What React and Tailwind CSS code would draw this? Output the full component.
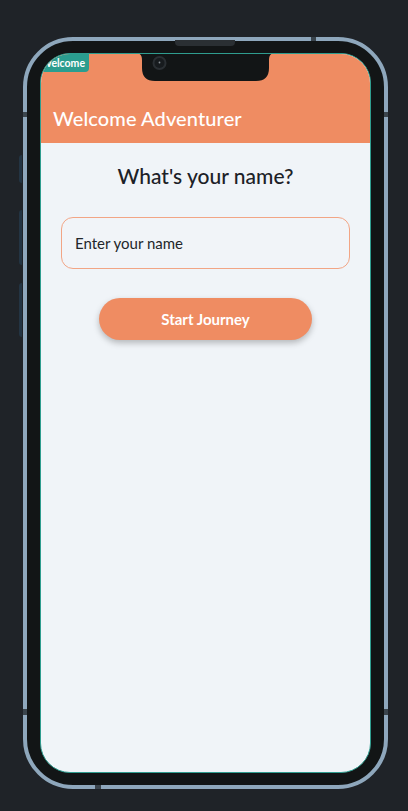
export default function App() {
  const font = { fontFamily: 'Lato, "Noto Sans", sans-serif' };
  return (
    <div className="w-[408px] h-[811px] bg-[#1f2328] relative overflow-hidden pl-[23px] pt-[37px]" style={font}>
      {/* faint side buttons behind frame */}
      <div className="absolute left-[19px] top-[155px] w-[3px] h-[28px] bg-[#233443] rounded-l-sm" />
      <div className="absolute left-[19px] top-[210px] w-[3px] h-[55px] bg-[#233443] rounded-l-sm" />
      <div className="absolute left-[19px] top-[283px] w-[3px] h-[54px] bg-[#233443] rounded-l-sm" />

      <div className="relative w-[365px] h-[752px] rounded-[50px] border-4 border-[#8ea7bc] bg-[#121516] pt-[12px] pb-[12px] px-[13px]">
        {/* speaker */}
        <div className="absolute left-[148px] top-[-1px] w-[60px] h-[6px] rounded-b-[4px] bg-[#2a2f33]" />
        {/* frame marks */}
        <div className="absolute left-[-4px] top-[71px] w-[4px] h-[5px] bg-[#3a444c]" />
        <div className="absolute right-[-4px] top-[71px] w-[4px] h-[5px] bg-[#3a444c]" />
        <div className="absolute left-[-4px] top-[668px] w-[4px] h-[6px] bg-[#3a444c]" />
        <div className="absolute right-[-4px] top-[668px] w-[4px] h-[6px] bg-[#3a444c]" />
        <div className="absolute left-[284px] top-[-4px] w-[5px] h-[4px] bg-[#3a444c]" />
        <div className="absolute left-[68px] bottom-[-4px] w-[6px] h-[4px] bg-[#3a444c]" />

        {/* screen */}
        <div className="relative w-full h-full rounded-[30px] overflow-hidden border border-[#2f9d8f] bg-[#f0f4f8] flex flex-col">
          {/* header */}
          <div className="h-[89px] shrink-0 bg-[#ef8c62] flex items-end px-3 pb-[11px]">
            <h1 className="text-[20px] leading-[28px] font-medium text-white tracking-[0.1px]">Welcome Adventurer</h1>
          </div>

          {/* content */}
          <div className="flex flex-col items-center px-5 pt-[19px]">
            <h2 className="text-[21px] leading-[28px] font-medium text-[#1c2127]">What's your name?</h2>
            <div className="mt-[27px] w-full h-[52px] rounded-[12px] border border-[#f2a585] bg-[#f1f4f8] flex items-center px-[13px]">
              <span className="text-[15px] text-[#22262a]">Enter your name</span>
            </div>
            <button className="mt-[29px] w-[213px] h-[42px] rounded-full bg-[#ef8c62] text-white text-[15px] font-bold shadow-[0_3px_6px_rgba(0,0,0,0.25)]">
              Start Journey
            </button>
          </div>

          {/* badge */}
          <div className="absolute left-0 top-0 h-[18px] bg-[#2a9d8f] rounded-br-[4px] pl-0 pr-[4px] flex items-center">
            <span className="text-[10.5px] font-bold text-white leading-none">Welcome</span>
          </div>

          {/* notch */}
          <svg className="absolute left-[95px] top-[-1px]" width="139" height="28" viewBox="0 0 139 28">
            <path d="M0 0 H139 Q133 0 133 7 V15 Q133 28 120 28 H19 Q6 28 6 15 V7 Q6 0 0 0 Z" fill="#121516" />
            <circle cx="23.5" cy="10" r="7" fill="#2a2f33" />
            <circle cx="23.5" cy="10" r="5" fill="#171b1e" />
            <circle cx="23.5" cy="9.5" r="0.9" fill="#8a9095" />
          </svg>
        </div>
      </div>
    </div>
  );
}
